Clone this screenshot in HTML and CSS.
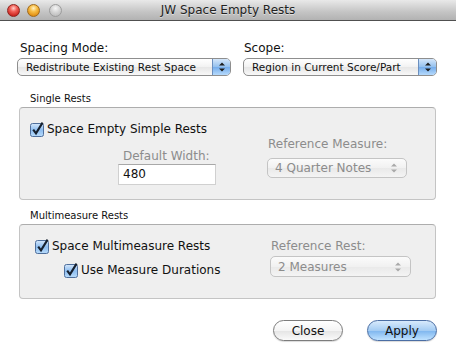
FILE: index.html
```html
<!DOCTYPE html>
<html lang="en">
<head>
    <meta charset="UTF-8">
    <title>JW Space Empty Rests</title>
    <link rel="stylesheet" href="styles.css">
</head>
<body>
    <div class="window">
        <div class="titlebar">
            <div class="lights">
                <span class="light red"></span>
                <span class="light yellow"></span>
                <span class="light gray"></span>
            </div>
            <div class="title">JW Space Empty Rests</div>
            <div></div>
        </div>

        <div class="content">
            <div class="top-row">
                <div class="field spacing">
                    <div class="label">Spacing Mode:</div>
                    <div class="popup small">
                        <span class="popup-text">Redistribute Existing Rest Space</span>
                        <span class="popup-arrows">
                            <svg width="8" height="12" viewBox="0 0 8 12"><path d="M4 1.5 L7 4.5 L1 4.5 Z M4 10.5 L7 7.5 L1 7.5 Z" fill="#1d1d1d"/></svg>
                        </span>
                    </div>
                </div>
                <div class="field scope">
                    <div class="label">Scope:</div>
                    <div class="popup small">
                        <span class="popup-text">Region in Current Score/Part</span>
                        <span class="popup-arrows">
                            <svg width="8" height="12" viewBox="0 0 8 12"><path d="M4 1.5 L7 4.5 L1 4.5 Z M4 10.5 L7 7.5 L1 7.5 Z" fill="#1d1d1d"/></svg>
                        </span>
                    </div>
                </div>
            </div>

            <!-- Single rests group -->
            <div class="group-title">Single Rests</div>
            <div class="group single">
                <div class="group-left">
                    <div class="check">
                        <svg class="checkbox" width="16" height="16" viewBox="0 0 16 16">
                            <defs>
                                <linearGradient id="cb1" x1="0" y1="0" x2="0" y2="1">
                                    <stop offset="0" stop-color="#d6e8fb"/>
                                    <stop offset="0.5" stop-color="#8dbdf0"/>
                                    <stop offset="1" stop-color="#b9dcfb"/>
                                </linearGradient>
                            </defs>
                            <rect x="1.5" y="2.5" width="13" height="13" rx="2" fill="url(#cb1)" stroke="#4f6f9c"/>
                            <path d="M4.2 8.6 L7 12.4 L13.6 1.6" fill="none" stroke="#16202e" stroke-width="2.1"/>
                        </svg>
                        <span>Space Empty Simple Rests</span>
                    </div>
                    <div class="width-field">
                        <div class="label muted">Default Width:</div>
                        <div class="textbox">480</div>
                    </div>
                </div>
                <div class="group-right first">
                    <div class="label muted">Reference Measure:</div>
                    <div class="popup disabled">
                        <span class="popup-text">4 Quarter Notes</span>
                        <span class="popup-arrows">
                            <svg width="8" height="12" viewBox="0 0 8 12"><path d="M4 1.5 L7 4.5 L1 4.5 Z M4 10.5 L7 7.5 L1 7.5 Z" fill="#a9a9a9"/></svg>
                        </span>
                    </div>
                </div>
            </div>

            <!-- Multimeasure rests group -->
            <div class="group-title multi-title">Multimeasure Rests</div>
            <div class="group multi">
                <div class="group-left">
                    <div class="check">
                        <svg class="checkbox" width="16" height="16" viewBox="0 0 16 16">
                            <defs>
                                <linearGradient id="cb2" x1="0" y1="0" x2="0" y2="1">
                                    <stop offset="0" stop-color="#d6e8fb"/>
                                    <stop offset="0.5" stop-color="#8dbdf0"/>
                                    <stop offset="1" stop-color="#b9dcfb"/>
                                </linearGradient>
                            </defs>
                            <rect x="1.5" y="2.5" width="13" height="13" rx="2" fill="url(#cb2)" stroke="#4f6f9c"/>
                            <path d="M4.2 8.6 L7 12.4 L13.6 1.6" fill="none" stroke="#16202e" stroke-width="2.1"/>
                        </svg>
                        <span>Space Multimeasure Rests</span>
                    </div>
                    <div class="check sub">
                        <svg class="checkbox" width="16" height="16" viewBox="0 0 16 16">
                            <rect x="1.5" y="2.5" width="13" height="13" rx="2" fill="url(#cb2)" stroke="#4f6f9c"/>
                            <path d="M4.2 8.6 L7 12.4 L13.6 1.6" fill="none" stroke="#16202e" stroke-width="2.1"/>
                        </svg>
                        <span>Use Measure Durations</span>
                    </div>
                </div>
                <div class="group-right second">
                    <div class="label muted">Reference Rest:</div>
                    <div class="popup disabled">
                        <span class="popup-text">2 Measures</span>
                        <span class="popup-arrows">
                            <svg width="8" height="12" viewBox="0 0 8 12"><path d="M4 1.5 L7 4.5 L1 4.5 Z M4 10.5 L7 7.5 L1 7.5 Z" fill="#a9a9a9"/></svg>
                        </span>
                    </div>
                </div>
            </div>

            <div class="buttons">
                <button class="btn">Close</button>
                <button class="btn default">Apply</button>
            </div>
        </div>
    </div>
</body>
</html>
```

FILE: styles.css
```css
body {
    margin: 0;
    padding: 0;
    background: #fff;
    font-family: "DejaVu Sans", "Liberation Sans", sans-serif;
    font-size: 12px;
    color: #111;
}
.window {
    width: 456px;
    height: 360px;
    background: #fff;
    overflow: hidden;
}

/* Title bar */
.titlebar {
    height: 21px;
    box-sizing: border-box;
    border-bottom: 1px solid #505050;
    background: linear-gradient(#e9e9e9, #c4c4c4 60%, #b2b2b2);
    display: grid;
    grid-template-columns: 1fr auto 1fr;
    align-items: center;
}
.lights {
    display: flex;
    align-items: center;
}
.light {
    width: 13px;
    height: 13px;
    border-radius: 50%;
    box-sizing: border-box;
}
.red {
    margin-left: 7px;
    background: radial-gradient(circle at 50% 30%, #ffd0cc 0, #f2625a 35%, #c8221c 80%, #9e1410 100%);
    border: 1px solid #8e2420;
}
.yellow {
    margin-left: 7px;
    background: radial-gradient(circle at 50% 30%, #fff2c8 0, #f7c04a 35%, #e08d10 80%, #b36a08 100%);
    border: 1px solid #a06a1c;
}
.gray {
    margin-left: 9px;
    background: radial-gradient(circle at 50% 30%, #f6f6f6 0, #d4d4d4 45%, #b2b2b2 100%);
    border: 1px solid #9c9c9c;
}
.title {
    color: #222;
    font-size: 12px;
    text-shadow: 0 1px 0 rgba(255, 255, 255, 0.5);
}

.content {
    padding: 20px 19px 0 17px;
}

/* Top popups */
.top-row {
    display: flex;
    gap: 12px;
}
.spacing {
    width: 214px;
}
.scope {
    width: 194px;
}
.label {
    line-height: 15px;
    white-space: nowrap;
}
.spacing .label {
    padding-left: 3px;
    margin-bottom: 2px;
}
.scope .label {
    padding-left: 1px;
    margin-bottom: 2px;
}
.muted {
    color: #8c8c8c;
}

.popup {
    display: flex;
    align-items: stretch;
    box-sizing: border-box;
    height: 20px;
    border: 1px solid #8e8e8e;
    border-radius: 5px;
    background: linear-gradient(#ffffff, #f2f2f2 50%, #e6e6e6 51%, #f8f8f8);
    overflow: hidden;
}
.popup.small {
    height: 18px;
    font-size: 10.5px;
}
.popup-text {
    flex: 1;
    padding-left: 8px;
    display: flex;
    align-items: center;
    white-space: nowrap;
}
.popup-arrows {
    width: 17px;
    display: flex;
    align-items: center;
    justify-content: center;
    border-left: 1px solid #6b8fbf;
    background: linear-gradient(#d4e6fa, #93c0ee 50%, #74aceb 51%, #b6dafc);
}
.popup.disabled {
    border-color: #c4c4c4;
    color: #8c8c8c;
    background: linear-gradient(#fbfbfb, #f1f1f1 50%, #e9e9e9 51%, #f4f4f4);
}
.popup.disabled .popup-text {
    padding-left: 7px;
}
.popup.disabled .popup-arrows {
    width: 24px;
    background: none;
    border-left: none;
}

/* Groups */
.group-title {
    font-size: 10px;
    line-height: 12px;
    padding-left: 13px;
    margin-top: 17px;
}
.multi-title {
    margin-top: 10px;
}
.group {
    display: flex;
    margin: 2px 1px 0 2px;
    border: 1px solid #c4c4c4;
    border-top-color: #adadad;
    border-radius: 4px;
    background: #efefef;
}
.single {
    padding: 13px 0 14px 9px;
}
.multi {
    padding: 13px 0 20px 14px;
}
.single .group-left {
    width: 238px;
}
.multi .group-left {
    width: 236px;
}

.check {
    display: flex;
    align-items: center;
    height: 16px;
    white-space: nowrap;
}
.checkbox {
    flex: none;
    margin-right: 2px;
}
.check.sub {
    margin-top: 8px;
    margin-left: 29px;
}

.width-field {
    margin-top: 12px;
    margin-left: 89px;
    width: 98px;
}
.width-field .label {
    padding-left: 5px;
}
.textbox {
    box-sizing: border-box;
    height: 21px;
    border: 1px solid #d0d0d0;
    border-top-color: #a8a8a8;
    background: #fff;
    padding-left: 4px;
    line-height: 19px;
}

.group-right.first {
    width: 140px;
    padding-top: 16px;
}
.group-right.first .label {
    padding-left: 1px;
    margin-bottom: 6px;
}
.group-right.second {
    width: 141px;
    padding-top: 1px;
}
.group-right.second .label {
    padding-left: 1px;
    margin-bottom: 2px;
}
.group-right.second .popup {
    height: 21px;
}

/* Buttons */
.buttons {
    display: flex;
    justify-content: flex-end;
    gap: 24px;
    margin-top: 21px;
}
.btn {
    width: 70px;
    height: 21px;
    padding: 0;
    border: 1px solid #7c7c7c;
    border-radius: 11px;
    font-family: "DejaVu Sans", "Liberation Sans", sans-serif;
    font-size: 12px;
    color: #111;
    background: linear-gradient(#ffffff, #f4f4f4 50%, #e4e4e4 51%, #fafafa);
    box-shadow: 0 1px 1px rgba(0, 0, 0, 0.15);
}
.btn.default {
    border-color: #4b6ea4;
    background: linear-gradient(#d8eafc, #a4ccf3 50%, #7db5ee 51%, #bfe2ff);
}
```
